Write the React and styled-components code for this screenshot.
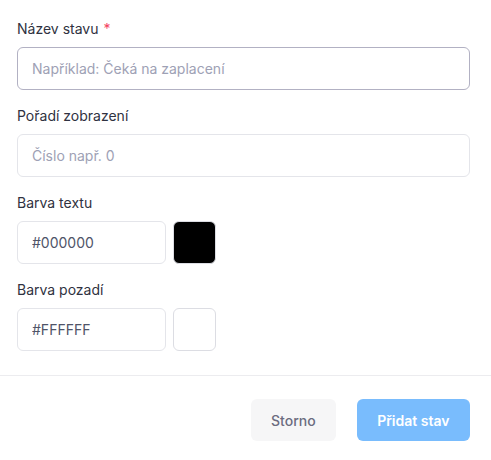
import React from "react";
import styled, { createGlobalStyle } from "styled-components";

const GlobalStyle = createGlobalStyle`
  body {
    margin: 0;
    background: #ffffff;
    font-family: Inter, "Noto Sans", sans-serif;
  }
`;

const Dialog = styled.div`
  width: 491px;
  background: #fff;
`;

const Body = styled.div`
  padding: 19px 21px 24px 17px;
  display: flex;
  flex-direction: column;
  gap: 16px;
`;

const Field = styled.div`
  display: flex;
  flex-direction: column;
`;

const Label = styled.label`
  font-size: 14px;
  line-height: 20px;
  color: #2f3241;
  margin-bottom: 8px;
  span {
    color: #f43f5e;
    margin-left: 5px;
  }
`;

const Input = styled.input`
  box-sizing: border-box;
  height: 43px;
  width: ${(p) => (p.$short ? "149px" : "100%")};
  border: 1px solid ${(p) => (p.$active ? "#b2b1c3" : "#e4e5ea")};
  border-radius: 6px;
  padding: 0 14px;
  font-family: Inter, "Noto Sans", sans-serif;
  font-size: 14px;
  color: #4f5468;
  outline: none;
  &::placeholder {
    color: #9ea1b5;
  }
`;

const ColorRow = styled.div`
  display: flex;
  gap: 7px;
`;

const Swatch = styled.div`
  box-sizing: border-box;
  width: 43px;
  height: 43px;
  border-radius: 6px;
  border: 1px solid #dcdde3;
  background: ${(p) => p.$color};
`;

const Footer = styled.div`
  border-top: 1px solid #ececef;
  padding: 23px 21px 19px;
  display: flex;
  justify-content: flex-end;
  gap: 21px;
`;

const Button = styled.button`
  height: 42px;
  padding: 0 ${(p) => (p.$primary ? "20.5px" : "20px")};
  border: none;
  border-radius: 6px;
  font-family: Inter, "Noto Sans", sans-serif;
  font-size: 14px;
  font-weight: ${(p) => (p.$primary ? 600 : 500)};
  background: ${(p) => (p.$primary ? "#79bcfd" : "#f6f6f7")};
  color: ${(p) => (p.$primary ? "#ffffff" : "#6b6c80")};
  cursor: pointer;
`;

export default function App() {
  return (
    <Dialog>
      <GlobalStyle />
      <Body>
        <Field>
          <Label>
            Název stavu<span>*</span>
          </Label>
          <Input $active placeholder="Například: Čeká na zaplacení" />
        </Field>
        <Field>
          <Label>Pořadí zobrazení</Label>
          <Input placeholder="Číslo např. 0" />
        </Field>
        <Field>
          <Label>Barva textu</Label>
          <ColorRow>
            <Input $short defaultValue="#000000" />
            <Swatch $color="#000000" />
          </ColorRow>
        </Field>
        <Field>
          <Label>Barva pozadí</Label>
          <ColorRow>
            <Input $short defaultValue="#FFFFFF" />
            <Swatch $color="#ffffff" />
          </ColorRow>
        </Field>
      </Body>
      <Footer>
        <Button>Storno</Button>
        <Button $primary>Přidat stav</Button>
      </Footer>
    </Dialog>
  );
}
